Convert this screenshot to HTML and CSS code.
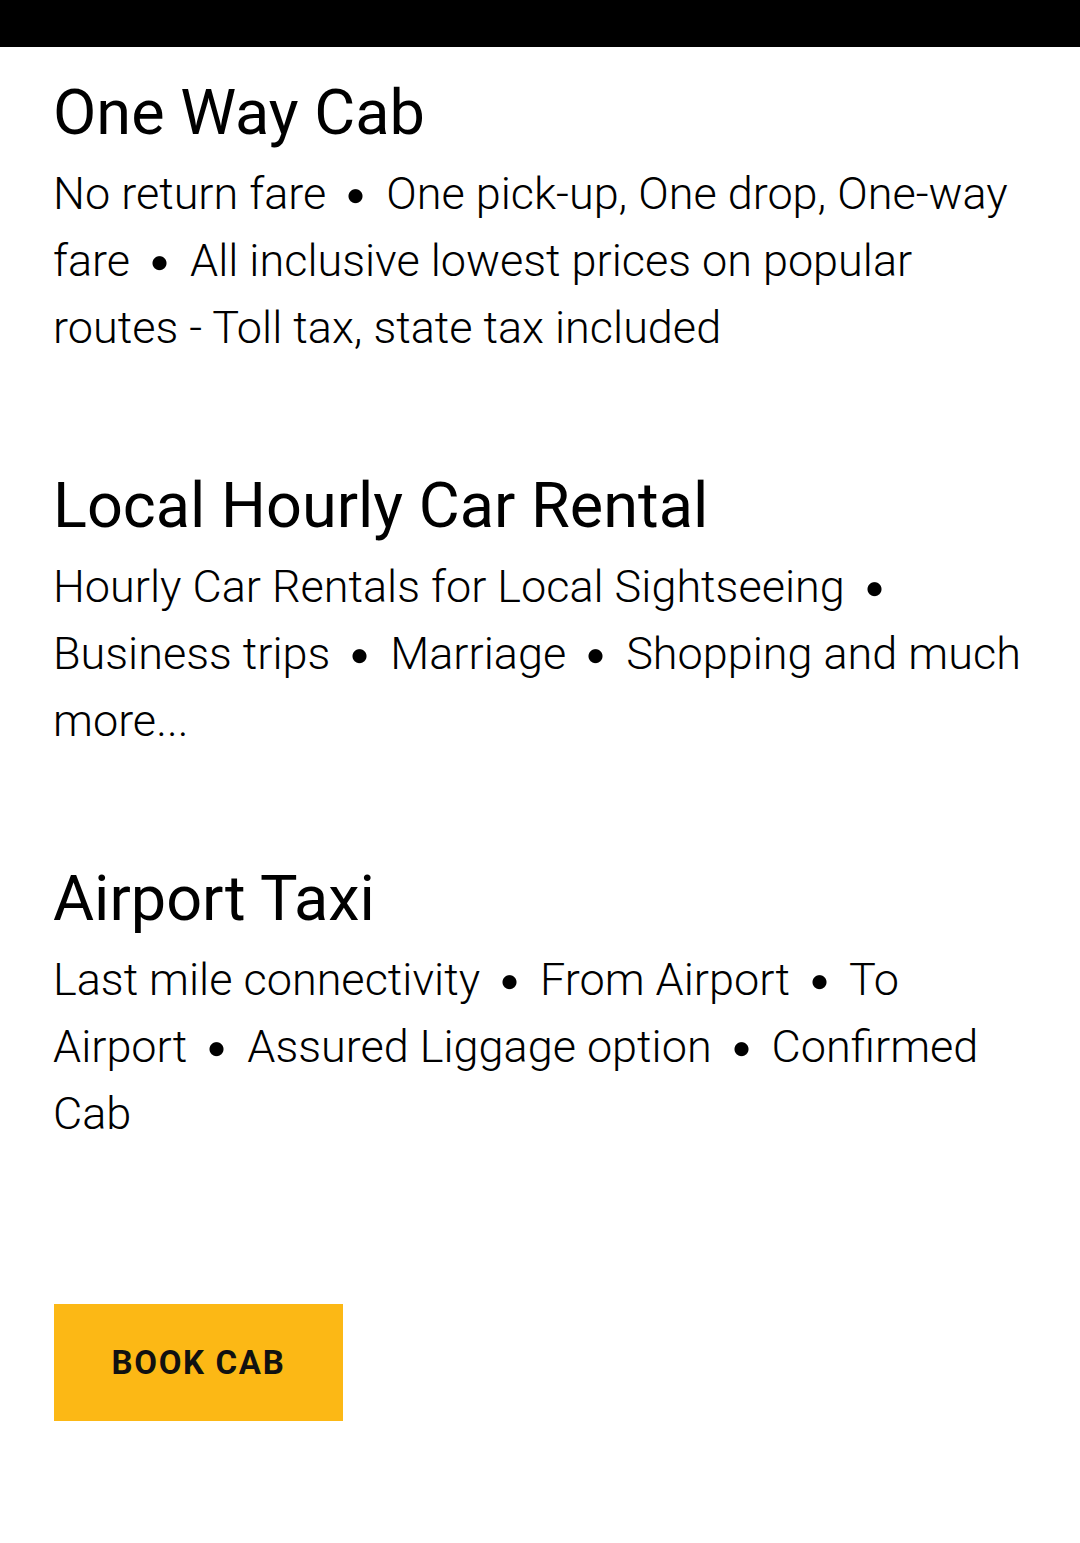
FILE: index.html
```html
<!DOCTYPE html>
<html>
<head>
    <title>Cab Services</title>
    <link rel="stylesheet" href="styles.css">
</head>
<body>
    <div class="status-bar"></div>

    <div class="content">
        <div class="service">
            <h2>One Way Cab</h2>
            <p>No return fare<span class="dot"></span> One pick-up, One drop, One-way fare<span class="dot"></span> All inclusive lowest prices on popular routes - Toll tax, state tax included</p>
        </div>

        <div class="service">
            <h2>Local Hourly Car Rental</h2>
            <p>Hourly Car Rentals for Local Sightseeing<span class="dot"></span> Business trips<span class="dot"></span> Marriage<span class="dot"></span> Shopping and much more...</p>
        </div>

        <div class="service">
            <h2>Airport Taxi</h2>
            <p>Last mile connectivity<span class="dot"></span> From Airport<span class="dot"></span> To Airport<span class="dot"></span> Assured Liggage option<span class="dot"></span> Confirmed Cab</p>
        </div>

        <button class="book-btn">BOOK CAB</button>
    </div>
</body>
</html>
```

FILE: styles.css
```css
body {
    margin: 0;
    font-family: Roboto, 'Noto Sans', sans-serif;
    background-color: #fff;
    color: #000;
}
.status-bar {
    height: 47px;
    background-color: #000;
}
.content {
    padding: 28px 45px 0 53px;
}
.service {
    margin-bottom: 107px;
}
.service h2 {
    font-size: 63px;
    font-weight: 400;
    line-height: 76px;
    margin: 0 0 9px;
}
.service p {
    font-size: 45px;
    font-weight: 300;
    line-height: 67px;
    margin: 0;
}
/* round bullet between items, kept on the line of the word before it */
.dot {
    padding: 0 7.5px;
    margin: 0 12px 0 22px;
    background: radial-gradient(circle at 50% 55%, #000 6.5px, transparent 7.5px);
}
.service:last-of-type {
    margin-bottom: 157px;
}
.book-btn {
    display: block;
    width: 289px;
    height: 117px;
    margin-left: 1px;
    background-color: #fcb815;
    color: #111;
    border: none;
    border-radius: 0;
    font-family: Roboto, sans-serif;
    font-size: 33px;
    font-weight: 700;
    letter-spacing: 0.05em;
    cursor: pointer;
}
```
